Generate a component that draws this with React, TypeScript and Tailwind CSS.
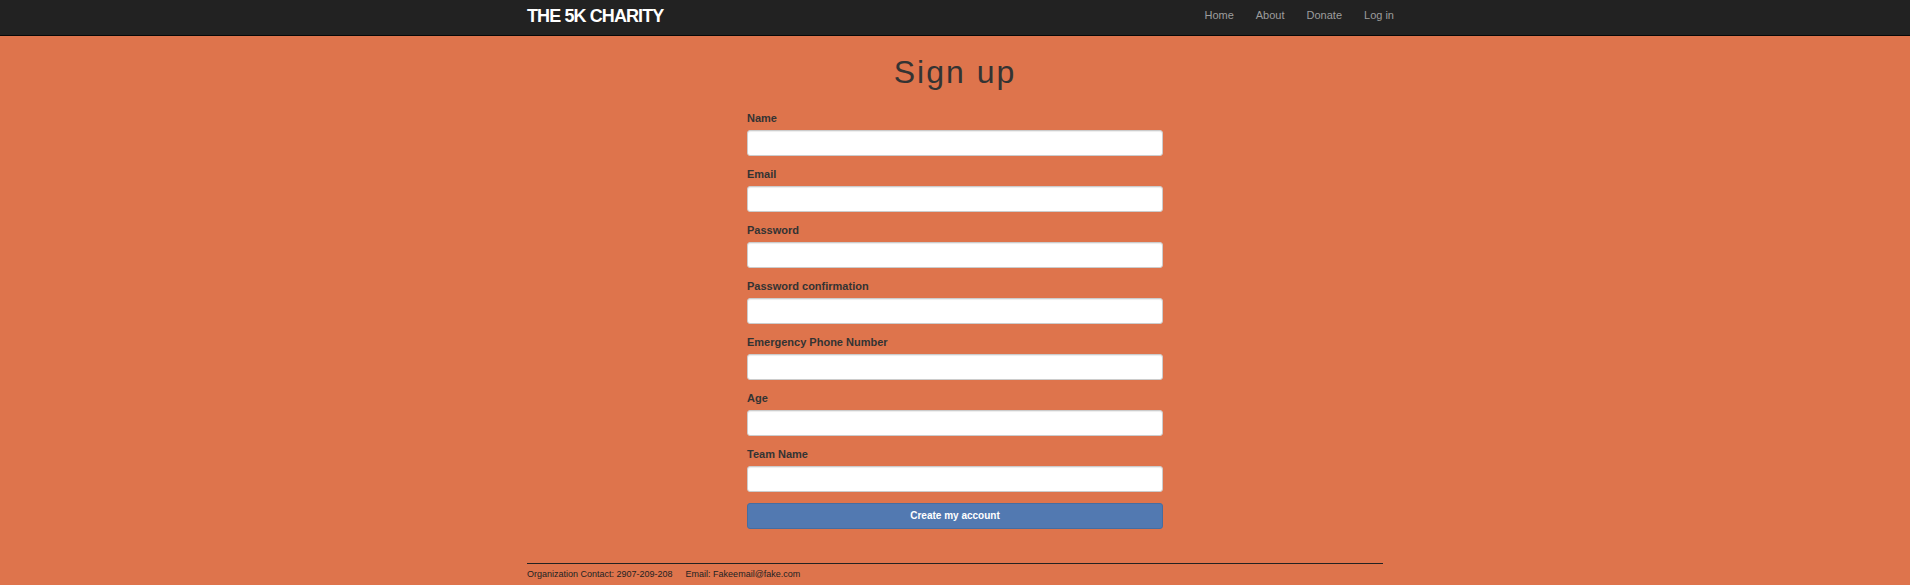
const links = ["Home", "About", "Donate", "Log in"];

const fields = [
  { id: "name", label: "Name", type: "text" },
  { id: "email", label: "Email", type: "email" },
  { id: "password", label: "Password", type: "password" },
  { id: "password-confirmation", label: "Password confirmation", type: "password" },
  { id: "phone", label: "Emergency Phone Number", type: "tel" },
  { id: "age", label: "Age", type: "text" },
  { id: "team", label: "Team Name", type: "text" },
];

function Header() {
  return (
    <header className="border-b border-[#080808] bg-[#222222]">
      <div className="mx-auto flex h-[35px] max-w-[878px] items-start justify-between pl-[11px]">
        <a href="#" className="pt-1 text-[18px] leading-6 font-bold tracking-tighter text-white uppercase">
          The 5K Charity
        </a>
        <nav className="-mr-[11px] flex">
          {links.map((link) => (
            <a key={link} href="#" className="px-[11px] py-2 text-[11px] leading-[15px] text-[#9d9d9d] hover:text-white">
              {link}
            </a>
          ))}
        </nav>
      </div>
    </header>
  );
}

function SignUpForm() {
  return (
    <form className="mx-auto max-w-[416px]">
      {fields.map((field) => (
        <div key={field.id} className="mb-[11px]">
          <label htmlFor={field.id} className="mb-1 block text-[11px] leading-[15px] font-bold">
            {field.label}
          </label>
          <input
            id={field.id}
            type={field.type}
            className="block h-[26px] w-full rounded-[3px] border border-[#cccccc] bg-white px-2 text-[11px] shadow-[inset_0_1px_1px_rgba(0,0,0,0.075)]"
          />
        </div>
      ))}
      <button
        type="submit"
        className="block h-[26px] w-full rounded-[3px] border border-[#466da0] bg-[#5279b1] text-[10px] leading-4 font-bold text-white"
      >
        Create my account
      </button>
    </form>
  );
}

export default function App() {
  return (
    <div className="min-h-screen bg-[#de744c] font-['Liberation_Sans',Arial,sans-serif] text-[#333333]">
      <Header />
      <div className="mx-auto max-w-[878px] px-[11px]">
        <main>
          <h1 className="pt-4 pb-[19px] text-center text-[32px] leading-10 tracking-[2px]">Sign up</h1>
          <SignUpForm />
        </main>
        <footer className="mt-[34px] flex gap-[13px] border-t border-[#222222] pt-1 text-[9px] leading-3 text-[#222222]">
          <span>Organization Contact: 2907-209-208</span>
          <span>Email: Fakeemail@fake.com</span>
        </footer>
      </div>
    </div>
  );
}
